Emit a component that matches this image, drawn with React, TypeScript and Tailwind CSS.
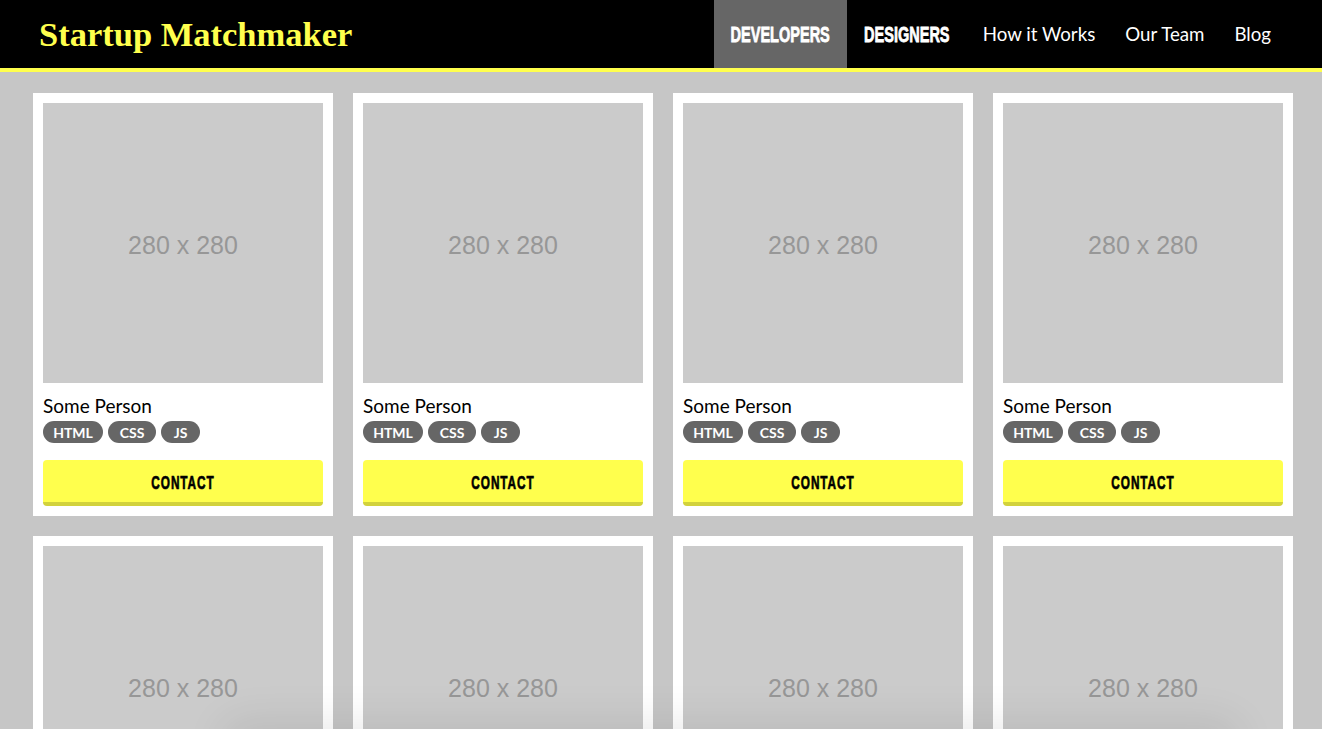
import React from 'react';

const NAV = [
  { label: 'DEVELOPERS', active: true, condensed: true, w: 'w-[133px]' },
  { label: 'DESIGNERS', active: false, condensed: true, w: 'w-[121px]' },
  { label: 'How it Works', active: false, condensed: false, w: '' },
  { label: 'Our Team', active: false, condensed: false, w: '' },
  { label: 'Blog', active: false, condensed: false, w: '' },
];

const SKILLS = [
  { label: 'HTML', w: 'w-[60px]' },
  { label: 'CSS', w: 'w-[48px]' },
  { label: 'JS', w: 'w-[39px]' },
];

const people = Array.from({ length: 8 }, (_, i) => ({ id: i, name: 'Some Person' }));

const sans = { fontFamily: 'Lato, "Open Sans", sans-serif' };
const narrow = { fontFamily: '"Liberation Sans", Arial, sans-serif' };

const Card: React.FC<{ name: string }> = ({ name }) => (
  <div className="w-[300px] bg-white p-[10px]">
    <div className="w-[280px] h-[280px] bg-[#cbcbcb] flex items-center justify-center">
      <span className="mt-[6px] text-[25px] text-[#979797]" style={narrow}>280 x 280</span>
    </div>
    <div className="mt-[12px] text-[19px] leading-[22px] text-black" style={sans}>{name}</div>
    <div className="mt-[4px] flex gap-[5px]">
      {SKILLS.map(s => (
        <span key={s.label} className={`${s.w} h-[22px] rounded-full bg-[#666666] text-white text-[14px] font-bold flex items-center justify-center`} style={sans}>{s.label}</span>
      ))}
    </div>
    <button className="mt-[17px] w-full h-[46px] bg-[#ffff4d] rounded-[4px] border-b-[4px] border-[#d2d23c] flex items-center justify-center">
      <span className="mt-[4px] inline-block whitespace-nowrap scale-x-[0.62] text-black text-[19px] font-bold tracking-[1.5px] [-webkit-text-stroke:0.7px_black]" style={narrow}>CONTACT</span>
    </button>
  </div>
);

const App: React.FC = () => {
  return (
    <div className="min-h-screen bg-[#c6c6c6] overflow-hidden h-[729px] relative">
      <header className="h-[72px] bg-black border-b-[4px] border-[#ffff4d] flex items-stretch justify-between pl-[39px] pr-[36px]">
        <h1 className="self-center text-[#ffff4d] text-[34.5px] font-bold leading-none" style={{ fontFamily: '"Liberation Serif", "DejaVu Serif", serif' }}>
          Startup Matchmaker
        </h1>
        <nav className="flex items-stretch">
          {NAV.map(item => (
            <a
              key={item.label}
              className={`flex items-center justify-center text-white ${item.active ? 'bg-[#666666]' : ''} ${item.condensed ? item.w : 'px-[15px]'}`}
            >
              {item.condensed ? (
                <span className="inline-block whitespace-nowrap scale-x-[0.66] text-[22px] font-bold mt-[1px] [-webkit-text-stroke:0.8px_white]" style={narrow}>{item.label}</span>
              ) : (
                <span className="text-[18.7px] mt-[1px]" style={sans}>{item.label}</span>
              )}
            </a>
          ))}
        </nav>
      </header>
      <main className="pl-[33px] pt-[21px] grid grid-cols-[repeat(4,300px)] gap-[20px]">
        {people.map(p => (
          <Card key={p.id} name={p.name} />
        ))}
      </main>
      {/* faint shadow from the element below the fold */}
      <div className="fixed left-[230px] right-[90px] bottom-[-30px] h-[30px] rounded-full shadow-[0_0_40px_10px_rgba(0,0,0,0.08)]" />
    </div>
  );
};

export default App;
